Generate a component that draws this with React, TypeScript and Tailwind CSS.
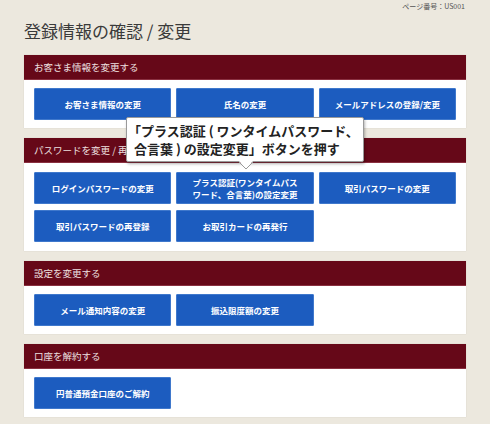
import React from "react";

const font = { fontFamily: '"Noto Sans CJK JP", "Noto Sans", sans-serif' };

function Btn({ children }: { children: React.ReactNode }) {
  return (
    <div className="h-[32px] bg-[#1c5cbf] border border-[#3f78cc] rounded-[1px] flex items-center justify-center text-center text-white font-bold text-[8.5px] leading-[12px]">
      {children}
    </div>
  );
}

function Panel({
  title,
  children,
  body,
}: {
  title: string;
  children: React.ReactNode;
  body: string;
}) {
  return (
    <div className="bg-white mb-[10px] shadow-[0_0_1px_rgba(0,0,0,0.15)]">
      <div className="h-[25px] bg-[#660818] flex items-center pl-[10px] text-[9.5px] text-[#eee0e0] border-b border-[#8a3040]">
        {title}
      </div>
      <div className={body}>{children}</div>
    </div>
  );
}

export default function App() {
  return (
    <div
      className="w-[490px] h-[424px] bg-[#ece8de] relative overflow-hidden px-[24px] text-[#333]"
      style={font}
    >
      <div className="h-[12px] leading-[12px] text-[7px] text-[#555] text-right pr-[1px]">
        ページ番号：US001
      </div>
      <div className="mt-[9px] mb-[14px] text-[17px] leading-[20px] text-[#3a3a3a]">
        登録情報の確認 / 変更
      </div>

      <Panel title="お客さま情報を変更する" body="grid grid-cols-3 gap-x-[5px] gap-y-[6px] px-[10px] pt-[8px] pb-[8px]">
        <Btn>お客さま情報の変更</Btn>
        <Btn>氏名の変更</Btn>
        <Btn>メールアドレスの登録/変更</Btn>
      </Panel>

      <Panel title="パスワードを変更 / 再登録" body="grid grid-cols-3 gap-x-[5px] gap-y-[6px] px-[10px] pt-[9px] pb-[9px]">
        <Btn>ログインパスワードの変更</Btn>
        <Btn>
          プラス認証(ワンタイムパス
          <br />
          ワード、合言葉)の設定変更
        </Btn>
        <Btn>取引パスワードの変更</Btn>
        <Btn>取引パスワードの再登録</Btn>
        <Btn>お取引カードの再発行</Btn>
      </Panel>

      <Panel title="設定を変更する" body="grid grid-cols-3 gap-x-[5px] gap-y-[6px] px-[10px] pt-[8px] pb-[8px]">
        <Btn>メール通知内容の変更</Btn>
        <Btn>振込限度額の変更</Btn>
      </Panel>

      <Panel title="口座を解約する" body="grid grid-cols-3 gap-x-[5px] gap-y-[6px] px-[10px] pt-[8px] pb-[8px]">
        <Btn>円普通預金口座のご解約</Btn>
      </Panel>

      <div className="absolute left-[126px] top-[117px] w-[238px] h-[45px] bg-white border border-[#9a9a9a] rounded-[2px] shadow-[1px_2px_3px_rgba(0,0,0,0.3)] pl-[1px] pt-[4px] text-[13px] leading-[18px] font-bold text-[#222]">
        <div className="whitespace-nowrap">「プラス認証 ( ワンタイムパスワード、</div>
        <div className="whitespace-nowrap pl-[6px]">合言葉 ) の設定変更」ボタンを押す</div>
        <svg
          className="absolute left-[112px] top-[43px]"
          width="14"
          height="9"
          viewBox="0 0 14 9"
        >
          <polygon points="0,0 14,0 7,8" fill="white" />
          <polyline points="0,1 7,8 14,1" fill="none" stroke="#9a9a9a" strokeWidth="1" />
        </svg>
      </div>
    </div>
  );
}
